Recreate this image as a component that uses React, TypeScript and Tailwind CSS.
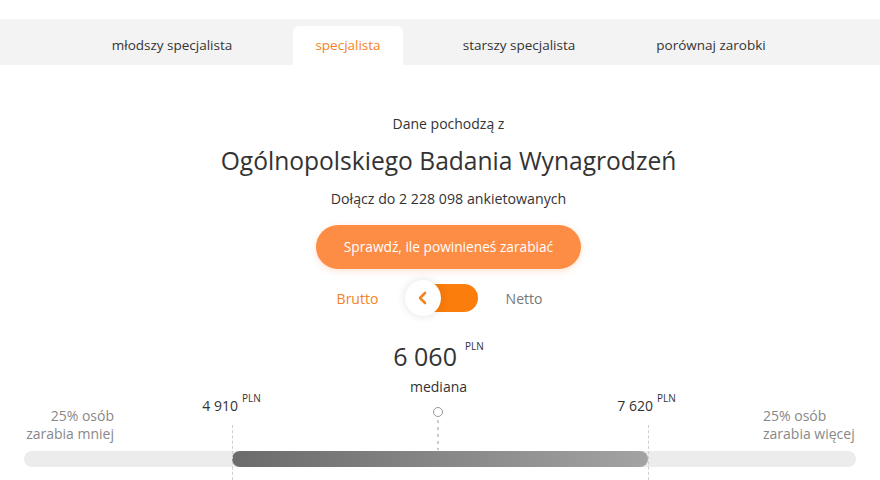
import React from "react";

const font = { fontFamily: '"Open Sans", "Noto Sans", sans-serif' };

function Tab({ label, active }: { label: string; active?: boolean }) {
  return (
    <div
      className={
        "h-[39px] flex items-center justify-center rounded-t-md text-[13.5px] " +
        (active ? "bg-white text-[#f5821f] w-[110px]" : "text-[#333]")
      }
    >
      {label}
    </div>
  );
}

export default function App() {
  return (
    <div style={font} className="w-[880px] h-[480px] bg-white overflow-hidden text-[#333]">
      <div className="h-[19px]" />
      <div className="h-[46px] bg-[#f3f3f3] pt-[7px] flex">
        <div className="w-[110px]" />
        <div className="w-[124px] flex justify-center"><Tab label="młodszy specjalista" /></div>
        <div className="w-[59px]" />
        <Tab label="specjalista" active />
        <div className="w-[56px]" />
        <div className="w-[120px] flex justify-center"><Tab label="starszy specjalista" /></div>
        <div className="w-[72px]" />
        <div className="w-[120px] flex justify-center"><Tab label="porównaj zarobki" /></div>
      </div>

      <div className="flex flex-col items-center">
        <div className="flex flex-col items-center pl-[17px]">
          <div className="mt-[49px] text-[14px] leading-[20px]">Dane pochodzą z</div>
          <div className="mt-[11px] text-[24.6px] leading-[32px]">Ogólnopolskiego Badania Wynagrodzeń</div>
          <div className="mt-[12px] text-[14.2px] leading-[20px]">Dołącz do 2 228 098 ankietowanych</div>
          <button className="mt-[16px] h-[44px] w-[265px] rounded-full bg-[#fd8c45] text-white text-[13.7px] shadow-[0_2px_6px_rgba(253,140,69,0.25)]">
            Sprawdź, ile powinieneś zarabiać
          </button>
        </div>
        <div className="mt-[11px] h-[36px] flex items-center ml-[12px]">
          <span className="text-[14px] text-[#f5821f] w-[42px] mr-[26px] ml-[-13px]">Brutto</span>
          <div className="relative w-[73px] h-[36px] flex items-center">
            <div className="absolute left-[4px] right-0 h-[28px] rounded-full bg-[#fb7d0b]" />
            <div className="relative w-[36px] h-[36px] rounded-full bg-white shadow-[0_0_10px_rgba(0,0,0,0.12)] flex items-center justify-center">
              <svg width="12" height="14" viewBox="0 0 12 14">
                <path d="M8 2 L3 7 L8 12" fill="none" stroke="#f5821f" strokeWidth="2.6" strokeLinecap="round" strokeLinejoin="round" />
              </svg>
            </div>
          </div>
          <span className="text-[14px] text-[#777] ml-[28px]">Netto</span>
        </div>
        <div className="mt-[24px] flex items-start leading-[32px] ml-[-3px]">
          <span className="text-[25px]">6 060</span>
          <span className="ml-[8px] text-[10px] leading-[14px] mt-[-1px]">PLN</span>
        </div>
        <div className="mt-[5px] text-[14px] leading-[20px] ml-[-3px]">mediana</div>
      </div>

      <div className="relative mx-6 pt-[10px]">
        <div className="flex justify-between text-[14px] leading-[18px] text-[#888]">
          <div className="text-right w-[90px]">25% osób<br />zarabia mniej</div>
          <div className="text-left w-[93px] whitespace-nowrap">25% osób<br />zarabia więcej</div>
        </div>
        <div className="mt-[8px] h-4 rounded-full bg-[#ececec] relative">
          <div className="absolute left-[25%] w-[50%] h-4 rounded-full bg-gradient-to-r from-[#6b6b6b] to-[#a3a3a3]" />
        </div>
        <div className="h-[13px]" />

        {/* dashed lines */}
        <div className="absolute left-[25%] top-[28px] bottom-0 border-l border-dashed border-[#cfcfcf]" />
        <div className="absolute left-[75%] top-[28px] bottom-0 border-l border-dashed border-[#cfcfcf]" />

        {/* median marker */}
        <div className="absolute left-[50%] -translate-x-1/2 ml-[-2px] top-[10px] w-[10px] h-[10px] rounded-full border border-[#999] bg-white" />
        <svg className="absolute left-[50%] ml-[-3px] top-[23px]" width="2" height="30" viewBox="0 0 2 30">
          <line x1="1" y1="0" x2="1" y2="30" stroke="#a8a8a8" strokeWidth="1.2" strokeDasharray="3 4" />
        </svg>

        {/* labels */}
        <div className="absolute right-[calc(75%-6px)] top-[0px] text-[14px] leading-[18px] text-[#333]">
          4 910
          <span className="absolute left-full ml-[4px] top-[-8px] text-[10px]">PLN</span>
        </div>
        <div className="absolute right-[calc(25%-8px)] top-[0px] text-[14px] leading-[18px] text-[#333] mr-[3px]">
          7 620
          <span className="absolute left-full ml-[4px] top-[-8px] text-[10px]">PLN</span>
        </div>
      </div>
    </div>
  );
}
